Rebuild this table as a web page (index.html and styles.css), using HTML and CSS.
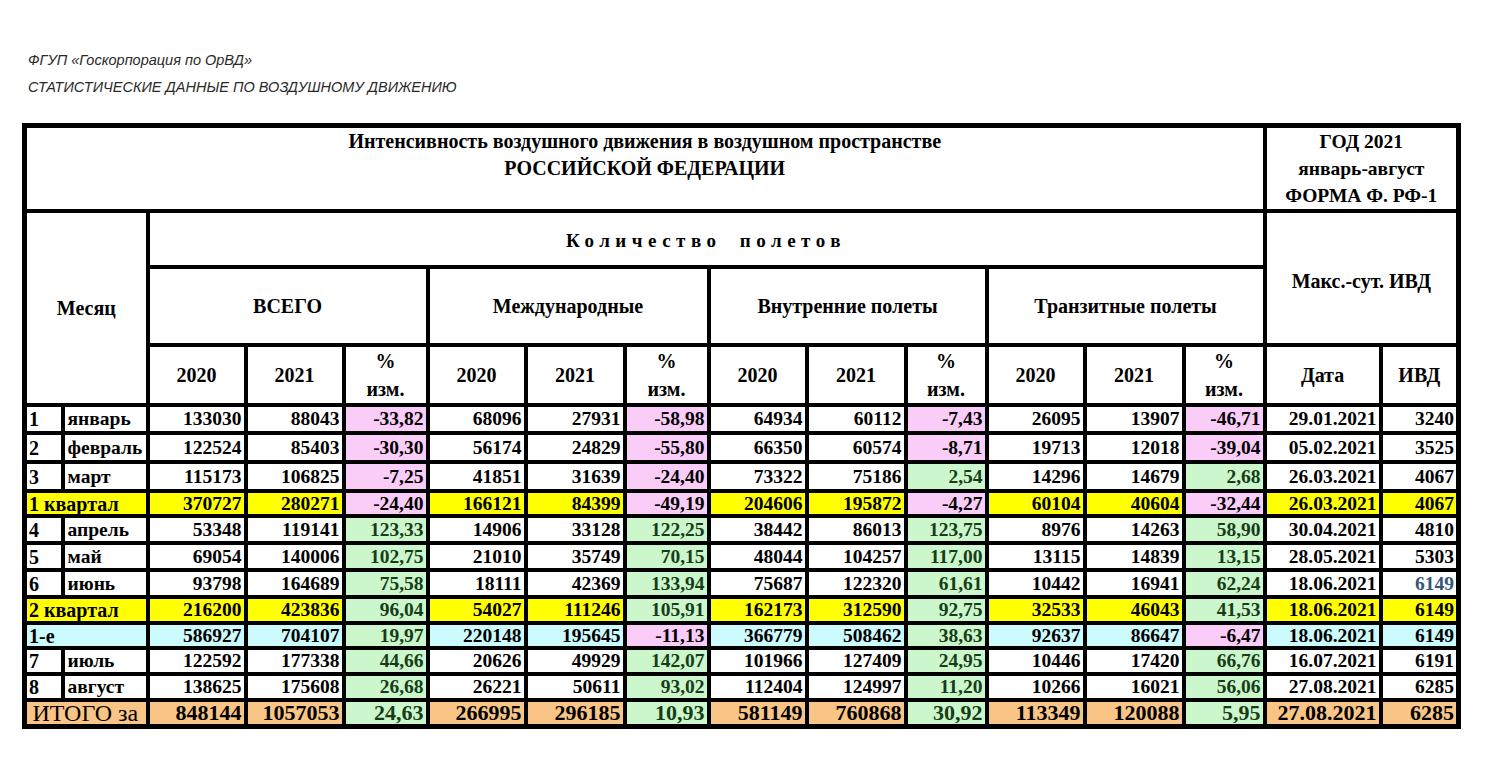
FILE: index.html
```html
<!DOCTYPE html>
<html lang="ru">
<head>
<meta charset="utf-8">
<title>Статистические данные по воздушному движению</title>
<link rel="stylesheet" href="styles.css">
</head>
<body>
<div class="page">
  <div class="caption">
    <p class="org">ФГУП «Госкорпорация по ОрВД»</p>
    <p class="sub">СТАТИСТИЧЕСКИЕ ДАННЫЕ ПО ВОЗДУШНОМУ ДВИЖЕНИЮ</p>
  </div>
  <table class="stat">
    <colgroup>
      <col class="c-num"><col class="c-name">
      <col class="c-y"><col class="c-y"><col class="c-p1">
      <col class="c-y"><col class="c-y2"><col class="c-p1">
      <col class="c-y"><col class="c-y2"><col class="c-p2">
      <col class="c-y"><col class="c-y2"><col class="c-p2">
      <col class="c-date"><col class="c-ivd">
    </colgroup>
    <thead>
      <tr class="r-title">
        <th colspan="14" class="title">Интенсивность воздушного движения в воздушном пространстве<br>РОССИЙСКОЙ ФЕДЕРАЦИИ</th>
        <th colspan="2" class="form">ГОД 2021<br>январь-август<br>ФОРМА Ф. РФ-1</th>
      </tr>
      <tr class="r-count">
        <th colspan="2" rowspan="3" class="month">Месяц</th>
        <th colspan="12" class="count">Количество полетов</th>
        <th colspan="2" rowspan="2" class="max">Макс.-сут. ИВД</th>
      </tr>
      <tr class="r-group">
        <th colspan="3">ВСЕГО</th>
        <th colspan="3">Международные</th>
        <th colspan="3">Внутренние полеты</th>
        <th colspan="3">Транзитные полеты</th>
      </tr>
      <tr class="r-year">
        <th>2020</th><th>2021</th><th class="pct">%<br>изм.</th>
        <th>2020</th><th>2021</th><th class="pct">%<br>изм.</th>
        <th>2020</th><th>2021</th><th class="pct">%<br>изм.</th>
        <th>2020</th><th>2021</th><th class="pct">%<br>изм.</th>
        <th>Дата</th><th>ИВД</th>
      </tr>
    </thead>
    <tbody>
      <tr class="h28">
        <td class="num">1</td><td class="name">январь</td>
        <td>133030</td><td>88043</td><td class="pk">-33,82</td>
        <td>68096</td><td>27931</td><td class="pk">-58,98</td>
        <td>64934</td><td>60112</td><td class="pk">-7,43</td>
        <td>26095</td><td>13907</td><td class="pk">-46,71</td>
        <td>29.01.2021</td><td>3240</td>
      </tr>
      <tr class="h29">
        <td class="num">2</td><td class="name">февраль</td>
        <td>122524</td><td>85403</td><td class="pk">-30,30</td>
        <td>56174</td><td>24829</td><td class="pk">-55,80</td>
        <td>66350</td><td>60574</td><td class="pk">-8,71</td>
        <td>19713</td><td>12018</td><td class="pk">-39,04</td>
        <td>05.02.2021</td><td>3525</td>
      </tr>
      <tr class="h29">
        <td class="num">3</td><td class="name">март</td>
        <td>115173</td><td>106825</td><td class="pk">-7,25</td>
        <td>41851</td><td>31639</td><td class="pk">-24,40</td>
        <td>73322</td><td>75186</td><td class="gr">2,54</td>
        <td>14296</td><td>14679</td><td class="gr">2,68</td>
        <td>26.03.2021</td><td>4067</td>
      </tr>
      <tr class="quarter h25">
        <td colspan="2" class="label">1 квартал</td>
        <td>370727</td><td>280271</td><td class="pk">-24,40</td>
        <td>166121</td><td>84399</td><td class="pk">-49,19</td>
        <td>204606</td><td>195872</td><td class="pk">-4,27</td>
        <td>60104</td><td>40604</td><td class="pk">-32,44</td>
        <td>26.03.2021</td><td>4067</td>
      </tr>
      <tr class="h27">
        <td class="num">4</td><td class="name">апрель</td>
        <td>53348</td><td>119141</td><td class="gr">123,33</td>
        <td>14906</td><td>33128</td><td class="gr">122,25</td>
        <td>38442</td><td>86013</td><td class="gr">123,75</td>
        <td>8976</td><td>14263</td><td class="gr">58,90</td>
        <td>30.04.2021</td><td>4810</td>
      </tr>
      <tr class="h27">
        <td class="num">5</td><td class="name">май</td>
        <td>69054</td><td>140006</td><td class="gr">102,75</td>
        <td>21010</td><td>35749</td><td class="gr">70,15</td>
        <td>48044</td><td>104257</td><td class="gr">117,00</td>
        <td>13115</td><td>14839</td><td class="gr">13,15</td>
        <td>28.05.2021</td><td>5303</td>
      </tr>
      <tr class="h27">
        <td class="num">6</td><td class="name">июнь</td>
        <td>93798</td><td>164689</td><td class="gr">75,58</td>
        <td>18111</td><td>42369</td><td class="gr">133,94</td>
        <td>75687</td><td>122320</td><td class="gr">61,61</td>
        <td>10442</td><td>16941</td><td class="gr">62,24</td>
        <td>18.06.2021</td><td class="blue">6149</td>
      </tr>
      <tr class="quarter h26">
        <td colspan="2" class="label">2 квартал</td>
        <td>216200</td><td>423836</td><td class="gr">96,04</td>
        <td>54027</td><td>111246</td><td class="gr">105,91</td>
        <td>162173</td><td>312590</td><td class="gr">92,75</td>
        <td>32533</td><td>46043</td><td class="gr">41,53</td>
        <td>18.06.2021</td><td>6149</td>
      </tr>
      <tr class="half h25">
        <td colspan="2" class="label">1-е</td>
        <td>586927</td><td>704107</td><td class="gr">19,97</td>
        <td>220148</td><td>195645</td><td class="pk">-11,13</td>
        <td>366779</td><td>508462</td><td class="gr">38,63</td>
        <td>92637</td><td>86647</td><td class="pk">-6,47</td>
        <td>18.06.2021</td><td>6149</td>
      </tr>
      <tr class="h26">
        <td class="num">7</td><td class="name">июль</td>
        <td>122592</td><td>177338</td><td class="gr">44,66</td>
        <td>20626</td><td>49929</td><td class="gr">142,07</td>
        <td>101966</td><td>127409</td><td class="gr">24,95</td>
        <td>10446</td><td>17420</td><td class="gr">66,76</td>
        <td>16.07.2021</td><td>6191</td>
      </tr>
      <tr class="h26">
        <td class="num">8</td><td class="name">август</td>
        <td>138625</td><td>175608</td><td class="gr">26,68</td>
        <td>26221</td><td>50611</td><td class="gr">93,02</td>
        <td>112404</td><td>124997</td><td class="gr">11,20</td>
        <td>10266</td><td>16021</td><td class="gr">56,06</td>
        <td>27.08.2021</td><td>6285</td>
      </tr>
      <tr class="total h26">
        <td colspan="2" class="label">ИТОГО за</td>
        <td>848144</td><td>1057053</td><td class="gr">24,63</td>
        <td>266995</td><td>296185</td><td class="gr">10,93</td>
        <td>581149</td><td>760868</td><td class="gr">30,92</td>
        <td>113349</td><td>120088</td><td class="gr">5,95</td>
        <td>27.08.2021</td><td>6285</td>
      </tr>
    </tbody>
  </table>
</div>
</body>
</html>
```
FILE: styles.css
```css
html, body {
  margin: 0;
  padding: 0;
  background: #ffffff;
}

.page {
  padding: 47px 0 0 22px;
}

.caption {
  padding-left: 6px;
  font-family: "Liberation Sans", Arial, sans-serif;
  font-style: italic;
  font-size: 14.5px;
  color: #2a2a2a;
}

.caption p {
  margin: 0;
  line-height: 27px;
}

.caption .sub {
  margin-bottom: 22px;
}

.stat {
  border-collapse: collapse;
  table-layout: fixed;
  width: 1439px;
  border: 5px solid #000;
  font-family: "Liberation Serif", "Times New Roman", serif;
  font-weight: bold;
  color: #000;
}

.c-num { width: 38px; }
.c-name { width: 85px; }
.c-y { width: 98px; }
.c-y2 { width: 99px; }
.c-p1 { width: 84px; }
.c-p2 { width: 81px; }
.c-date { width: 116px; }
.c-ivd { width: 78px; }

.stat th,
.stat td {
  border: 4px solid #000;
  padding: 0;
}

.stat th {
  font-size: 20px;
  text-align: center;
  vertical-align: middle;
  line-height: 27px;
}

.r-title { height: 83px; }
.r-count { height: 56px; }
.r-group { height: 78px; }
.r-year { height: 53px; }

.stat th.title {
  vertical-align: top;
  padding-top: 0;
  font-size: 20px;
}

.stat th.form {
  font-size: 19.5px;
}

.stat th.count {
  font-size: 19px;
  letter-spacing: 5.5px;
  word-spacing: 8px;
  padding-top: 2px;
}

.stat th.max {
  padding-top: 6px;
}

.stat th.pct {
  line-height: 28px;
}

.stat td {
  font-size: 19.5px;
  line-height: 20px;
  text-align: right;
  vertical-align: middle;
  padding-right: 2px;
  white-space: nowrap;
}

.h29 { height: 29px; }
.h28 { height: 28px; }
.h27 { height: 27px; }
.h26 { height: 26px; }
.h25 { height: 25px; }

.stat td.num {
  text-align: left;
  padding-left: 2px;
  font-size: 20px;
}

.stat td.name {
  text-align: left;
  padding-left: 3px;
  font-size: 19.5px;
}

.stat td.label {
  text-align: left;
  padding-left: 2px;
  font-size: 20px;
}

.quarter td { background: #ffff00; }
.half td { background: #ccfbfd; }
.total td { background: #f9c586; font-size: 22px; }

.stat .total td.label {
  font-weight: normal;
  font-size: 24px;
  text-align: center;
  padding-left: 0;
}

.stat td.pk { background: #f9cdf8; }
.stat td.gr { background: #ccf6cc; color: #173d18; }

.stat td.blue { color: #36567a; }
```
